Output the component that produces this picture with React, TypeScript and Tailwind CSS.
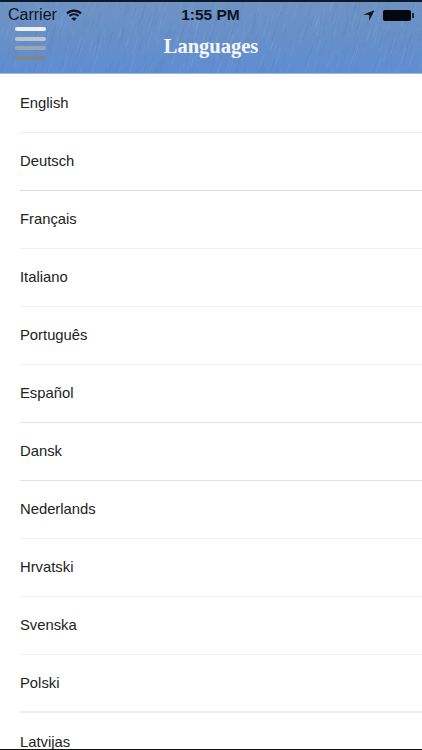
const languages = [
  { name: 'English', line: 'border-b border-[#ececec]' },
  { name: 'Deutsch', line: 'border-b border-[#dcdcdc]' },
  { name: 'Français', line: 'border-b border-[#f0f0f0]' },
  { name: 'Italiano', line: 'border-b border-[#f0f0f0]' },
  { name: 'Português', line: 'border-b border-[#f0f0f0]' },
  { name: 'Español', line: 'border-b border-[#e2e2e2]' },
  { name: 'Dansk', line: 'border-b border-[#e2e2e2]' },
  { name: 'Nederlands', line: 'border-b border-[#f0f0f0]' },
  { name: 'Hrvatski', line: 'border-b border-[#f0f0f0]' },
  { name: 'Svenska', line: 'border-b border-[#f0f0f0]' },
  { name: 'Polski', line: 'border-b-2 border-[#ececec]' },
  { name: 'Latvijas', line: '' },
];

const rand = (n: number) => {
  const v = Math.sin(n * 12.9898) * 43758.5453;
  return v - Math.floor(v);
};

// faint rain-like streaks on the header
const streaks = Array.from({ length: 420 }, (_, i) => ({
  x: rand(i + 1) * 440,
  y: rand(i + 500) * 80 - 8,
  len: 6 + rand(i + 900) * 14,
  light: rand(i + 1300) > 0.5,
}));

function HeaderTexture() {
  return (
    <svg className="absolute inset-0 h-full w-full" viewBox="0 0 422 72">
      {streaks.map((s, i) => (
        <line
          key={i}
          x1={s.x}
          y1={s.y}
          x2={s.x - s.len * 0.3}
          y2={s.y + s.len}
          stroke={s.light ? '#9dbce4' : '#44719f'}
          strokeOpacity={0.28}
          strokeWidth={0.6}
        />
      ))}
    </svg>
  );
}

function WifiIcon() {
  return (
    <svg width="16" height="12" viewBox="0 0 16 12" fill="none" stroke="#0b1420">
      <path d="M1 4.6C5 .6 11 .6 15 4.6" strokeWidth="2.1" />
      <path d="M3.5 7.1c2.6-2.4 6.4-2.4 9 0" strokeWidth="2.1" />
      <path d="M8 12 5.3 9.2c1.5-1.1 3.9-1.1 5.4 0z" fill="#0b1420" stroke="none" />
    </svg>
  );
}

function LocationArrow() {
  return (
    <svg width="12" height="11" viewBox="0 0 12 11">
      <path d="M11.5.3.4 4.4l5.8.7.1 5.6z" fill="#0b1420" />
    </svg>
  );
}

function MenuBars() {
  return (
    <div className="-mt-px flex w-[31px] flex-col gap-[5.5px] self-start">
      <div className="h-[4px] rounded-full bg-[#eef0f3]" />
      <div className="h-[4px] rounded-full bg-[#c0c5cc]" />
      <div className="h-[4px] rounded-full bg-[#a0a6af]" />
      <div className="h-[4px] rounded-full bg-[#80868f]" />
    </div>
  );
}

export default function App() {
  return (
    <div className="flex h-[750px] w-[422px] flex-col overflow-hidden bg-white font-['Liberation_Sans',sans-serif]">
      <div className="h-[2px] shrink-0 bg-[#0d1a2b]" />
      <header className="relative h-[72px] shrink-0 overflow-hidden border-b border-[#9db9dd] bg-gradient-to-b from-[#6f92c2] to-[#5f8dd0]">
        <HeaderTexture />
        <div className="relative grid h-[26px] grid-cols-[1fr_auto_1fr] items-center px-2 text-[#0b1420]">
          <div className="flex items-center gap-[9px]">
            <span className="text-[16px]">Carrier</span>
            <WifiIcon />
          </div>
          <span className="-ml-px text-[15.5px] font-bold">1:55 PM</span>
          <div className="flex items-center justify-end gap-2">
            <LocationArrow />
            <div className="flex items-center">
              <div className="h-[11px] w-[28px] rounded-[2px] bg-[#05080d]" />
              <div className="ml-px h-[5px] w-[2px] bg-[#1a2a3d]" />
            </div>
          </div>
        </div>
        <div className="relative grid h-[36px] grid-cols-[1fr_auto_1fr] items-center px-[15px]">
          <MenuBars />
          <h1 className="font-['Liberation_Serif',serif] text-[20.5px] font-bold leading-[24px] text-[#f4f7fb]">
            Languages
          </h1>
        </div>
      </header>
      <ul className="flex-1 overflow-hidden pt-px">
        {languages.map(({ name, line }) => (
          <li key={name} className="pl-5">
            <div className={`flex h-[58px] items-center text-[14.8px] text-[#222222] ${line}`}>{name}</div>
          </li>
        ))}
      </ul>
      <div className="h-px shrink-0 bg-[#111]" />
    </div>
  );
}
